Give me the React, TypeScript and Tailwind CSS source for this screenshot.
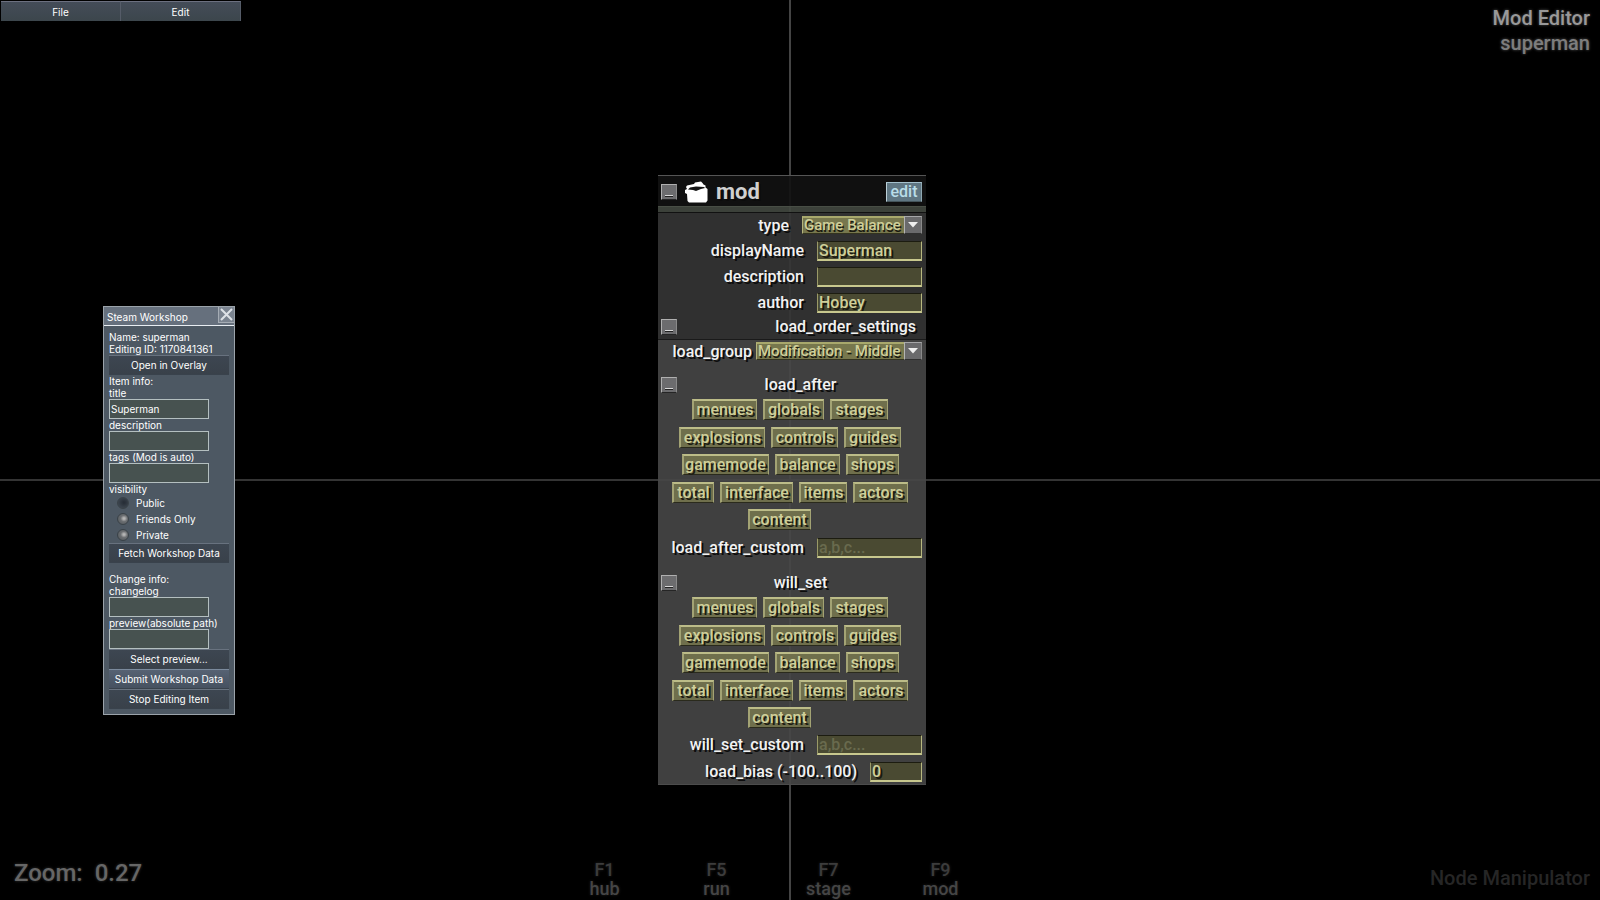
import { useId, type ReactNode } from "react";

type Tag = { name: string; width: string };

const TAG_ROWS: { pad: string; tags: Tag[] }[] = [
  {
    pad: "pr-1",
    tags: [
      { name: "menues", width: "w-[65px]" },
      { name: "globals", width: "w-[61px]" },
      { name: "stages", width: "w-[58px]" },
    ],
  },
  {
    pad: "pr-1",
    tags: [
      { name: "explosions", width: "w-[86px]" },
      { name: "controls", width: "w-[67px]" },
      { name: "guides", width: "w-[57px]" },
    ],
  },
  {
    pad: "pr-1",
    tags: [
      { name: "gamemode", width: "w-[87px]" },
      { name: "balance", width: "w-[65px]" },
      { name: "shops", width: "w-[53px]" },
    ],
  },
  {
    pad: "pr-1",
    tags: [
      { name: "total", width: "w-[42px]" },
      { name: "interface", width: "w-[73px]" },
      { name: "items", width: "w-[48px]" },
      { name: "actors", width: "w-[55px]" },
    ],
  },
  { pad: "pr-[26px]", tags: [{ name: "content", width: "w-[63px]" }] },
];

function CollapseButton({ label }: { label: string }) {
  return (
    <button
      aria-label={`Collapse ${label}`}
      className="flex h-4 w-4 shrink-0 items-end justify-center border border-t-[#b0b0b0] border-r-[#8a8a8a] border-b-[#252525] border-l-[#b0b0b0] bg-[#6c6c6e] pb-[2px]"
    >
      <span className="h-[2px] w-2 border-b border-[#222] bg-[#d8d8d8]" />
    </button>
  );
}

function NodeSelect({ label, value, width, gap }: { label: string; value: string; width: string; gap: string }) {
  const id = useId();
  return (
    <div className={`flex items-center justify-end pr-1 ${gap}`}>
      <label htmlFor={id} className="leading-[19px]">
        {label}
      </label>
      <div className={`relative h-[19px] ${width}`}>
        <select
          id={id}
          defaultValue={value}
          className="block h-[18px] w-full appearance-none border-t-2 border-b border-l border-t-[#a8a86c] border-b-[#33331f] border-l-[#b4b47c] bg-[#77774d] pl-px text-[15px] leading-[15px] text-[#cfcf9a] [text-shadow:1px_2px_0_#1a1a10] outline-none"
        >
          <option>{value}</option>
        </select>
        <span className="pointer-events-none absolute top-0 right-0 flex h-[18px] w-[18px] items-center justify-center border border-t-[#a6a6a8] border-r-[#8a8a8a] border-b-[#303030] border-l-[#b4b4b4] bg-[#6a6a6c]">
          <svg width="10" height="6" viewBox="0 0 10 6" aria-hidden="true">
            <path d="M0 0h10L5 5.5z" fill="#eee" />
          </svg>
        </span>
      </div>
    </div>
  );
}

function NodeInput({ label, value, placeholder, width = "w-[105px]" }: { label: string; value?: string; placeholder?: string; width?: string }) {
  const id = useId();
  return (
    <div className="flex h-5 items-center justify-end gap-[13px] pr-1">
      <label htmlFor={id}>{label}</label>
      <input
        id={id}
        defaultValue={value}
        placeholder={placeholder}
        className={`h-5 border-t border-r border-b-2 border-l border-t-[#1c1c10] border-r-[#b8b880] border-b-[#c8c88e] border-l-[#9a9a68] bg-[#4a4a32] px-px leading-4 text-[#cfcf9a] [text-shadow:2px_2px_0_#1a1a10] outline-none placeholder:text-[#696a4e] placeholder:[text-shadow:none] ${width}`}
      />
    </div>
  );
}

function TagGroup({ title }: { title: string }) {
  return (
    <section>
      <div className="flex h-[22px] items-start pr-[2px] pl-[3px]">
        <CollapseButton label={title} />
        <h3 className="flex-1 text-center leading-4">{title}</h3>
      </div>
      <div className="flex h-[131px] flex-col justify-between">
        {TAG_ROWS.map((row) => (
          <div key={row.tags[0].name} className={`flex justify-center gap-[6px] ${row.pad}`}>
            {row.tags.map((tag) => (
              <button
                key={tag.name}
                className={`flex h-[21px] items-center justify-center border-t-2 border-r border-b border-l-2 border-t-[#bcbc88] border-r-[#a3a374] border-b-[#2a2a1c] border-l-[#a3a374] bg-[#6f6f4c] leading-4 text-[#cfcf9a] [text-shadow:2px_2px_0_#1c1c12] ${tag.width}`}
              >
                {tag.name}
              </button>
            ))}
          </div>
        ))}
      </div>
    </section>
  );
}

function ModNode() {
  return (
    <main className="absolute top-[175px] left-[calc(50%-142px)] w-[268px] font-['Roboto',sans-serif] text-[16px] font-medium text-[#f2f2f2] [text-shadow:2px_2px_0_#0c0c0c]">
      <header className="flex h-[31px] items-center border-t border-[#555] bg-[#121212e6] pt-px pr-1 pl-[3px]">
        <CollapseButton label="mod" />
        <svg className="ml-2" width="23" height="22" viewBox="0 0 23 22" aria-hidden="true">
          <path d="M1 6 2 4.500 9 3l1-1.500L16 .5l1.500 1.500 1 1.500 2 1v2L22.500 8v11.500L21 21.500H4L2.500 20 2 13 0 12V9l2-1z" fill="#fff" />
          <path d="M3 8.500 5 6.500l6-1 8 .5 1 1-4 1-5 2-3-1z" fill="#151515" />
        </svg>
        <h2 className="ml-2 flex-1 text-[22px] leading-7 font-bold text-[#d0d0d0]">mod</h2>
        <button className="h-5 w-9 border border-t-[#a4c0cc] border-r-[#8fa8b2] border-b-[#45555c] border-l-[#bcd0d8] bg-[#5f7682] leading-4 text-[#b9dde8]">
          edit
        </button>
      </header>
      <div className="h-[7px] border-t border-b border-t-[#484e45] border-b-[#111] bg-[#424840e6]" />
      <div className="flex flex-col gap-[6px] bg-[#353535e6] pt-[3px] pb-[4px]">
        <NodeSelect label="type" value="Game Balance" width="w-[120px]" gap="gap-[13px]" />
        <NodeInput label="displayName" value="Superman" />
        <NodeInput label="description" value="" />
        <NodeInput label="author" value="Hobey" />
        <div className="flex items-start justify-between pr-[10px] pl-[3px]">
          <CollapseButton label="load_order_settings" />
          <h3 className="leading-4">load_order_settings</h3>
        </div>
      </div>
      <div className="border-t border-b border-t-[#1a1a1a] border-b-[#4c4c4c] bg-[#474747e6] pt-[2px] pb-[2px]">
        <NodeSelect label="load_group" value="Modification - Middle" width="w-[166px]" gap="gap-1" />
        <div className="pt-[16px]">
          <TagGroup title="load_after" />
        </div>
        <div className="pt-[8px]">
          <NodeInput label="load_after_custom" placeholder="a,b,c..." />
        </div>
        <div className="pt-[17px]">
          <TagGroup title="will_set" />
        </div>
        <div className="flex flex-col gap-[7px] pt-[7px]">
          <NodeInput label="will_set_custom" placeholder="a,b,c..." />
          <NodeInput label="load_bias (-100..100)" value="0" width="w-[52px]" />
        </div>
      </div>
    </main>
  );
}

function WorkshopField({ label, value }: { label: string; value?: string }) {
  const id = useId();
  return (
    <div className="flex flex-col items-start">
      <label htmlFor={id} className="h-3">
        {label}
      </label>
      <input
        id={id}
        defaultValue={value}
        className="h-5 w-[100px] border border-[#b4bfc0] bg-[#475250] px-px outline-none"
      />
    </div>
  );
}

function WorkshopButton({ children, active = false }: { children: ReactNode; active?: boolean }) {
  return (
    <button
      className={`h-5 w-full border-t border-b border-b-[#39424c] bg-linear-to-b ${
        active ? "border-t-[#7b8a9c] from-[#566273] to-[#465160]" : "border-t-[#68727f] from-[#3d4651] to-[#39414a]"
      }`}
    >
      {children}
    </button>
  );
}

function WorkshopWindow() {
  return (
    <aside className="absolute top-[306px] left-[103px] w-[132px] border border-[#9ba3aa] bg-[#4d5863] font-['Inter',sans-serif] text-[10px] leading-3 text-white">
      <header className="flex h-[19px] items-start justify-between border-b border-[#e8edf2] bg-[#66707d] pl-[3px]">
        <h2 className="pt-1">Steam Workshop</h2>
        <button aria-label="Close" className="flex h-4 w-4 items-center justify-center border-b border-l border-[#a5acb4] bg-[#7b8490]">
          <svg width="13" height="13" viewBox="0 0 13 13" aria-hidden="true">
            <path d="m1 1 11 11M12 1 1 12" stroke="#dde1e6" strokeWidth="2" />
          </svg>
        </button>
      </header>
      <form className="p-[5px]" onSubmit={(e) => e.preventDefault()}>
        <p>Name: superman</p>
        <p className="whitespace-nowrap">Editing ID: 1170841361</p>
        <WorkshopButton>Open in Overlay</WorkshopButton>
        <p>Item info:</p>
        <WorkshopField label="title" value="Superman" />
        <WorkshopField label="description" />
        <WorkshopField label="tags (Mod is auto)" />
        <fieldset>
          <legend className="h-3">visibility</legend>
          {["Public", "Friends Only", "Private"].map((name, i) => (
            <label key={name} className="flex h-4 items-center gap-[7px] pl-2">
              <input
                type="radio"
                name="visibility"
                defaultChecked={i === 0}
                className="h-3 w-3 appearance-none rounded-full border border-[#3a4248] bg-radial-[at_60%_45%] from-[#b5b5b5] from-10% via-[#6c6f72] via-40% to-[#4c5257] checked:from-[#282f38] checked:via-[#323a43] checked:to-[#46505a]"
              />
              {name}
            </label>
          ))}
        </fieldset>
        <WorkshopButton>Fetch Workshop Data</WorkshopButton>
        <p className="pt-[10px]">Change info:</p>
        <WorkshopField label="changelog" />
        <WorkshopField label="preview(absolute path)" />
        <WorkshopButton>Select preview...</WorkshopButton>
        <WorkshopButton active>Submit Workshop Data</WorkshopButton>
        <WorkshopButton>Stop Editing Item</WorkshopButton>
      </form>
    </aside>
  );
}

const SHORTCUTS = [
  { key: "F1", name: "hub" },
  { key: "F5", name: "run" },
  { key: "F7", name: "stage" },
  { key: "F9", name: "mod" },
];

export default function App() {
  return (
    <div className="relative flex min-h-screen flex-col justify-between overflow-hidden bg-black font-['Roboto',sans-serif]">
      <div className="absolute inset-y-0 left-[calc(50%-11px)] w-[2px] bg-[#444]" />
      <div className="absolute inset-x-0 top-[479px] h-[2px] bg-[#343434]" />

      <div className="flex items-start justify-between">
        <nav className="flex pt-px pl-px font-['Inter',sans-serif] text-[10px] leading-3 text-white">
          {["File", "Edit"].map((item) => (
            <button
              key={item}
              className="h-5 w-[120px] border-t border-r border-t-[#6c7080] border-r-[#555c68] bg-linear-to-b from-[#444c58] to-[#3c464c]"
            >
              {item}
            </button>
          ))}
        </nav>
        <div className="pt-[6px] pr-[10px] text-right text-[20px] leading-[25px] font-medium [text-shadow:0_0_3px_#555]">
          <h1 className="text-[#999]">Mod Editor</h1>
          <p className="text-[#7d7d7d]">superman</p>
        </div>
      </div>

      <WorkshopWindow />
      <ModNode />

      <footer className="grid grid-cols-[1fr_auto_1fr] items-end font-medium">
        <p className="pb-[11px] pl-[14px] text-[24px] leading-8 whitespace-pre text-[#666] [text-shadow:0_0_3px_#333]">Zoom:  0.27</p>
        <ul className="flex pr-[55px] pb-[2px] text-center text-[18px] leading-[19px] text-[#454545] [text-shadow:0_0_3px_#222]">
          {SHORTCUTS.map((s) => (
            <li key={s.key} className="w-[112px]">
              <a href={`#${s.name}`} className="flex flex-col">
                <span className="text-[#3c3c3c]">{s.key}</span>
                <span>{s.name}</span>
              </a>
            </li>
          ))}
        </ul>
        <p className="pr-[10px] pb-[10px] text-right text-[20px] leading-6 text-[#262626]">Node Manipulator</p>
      </footer>
    </div>
  );
}
